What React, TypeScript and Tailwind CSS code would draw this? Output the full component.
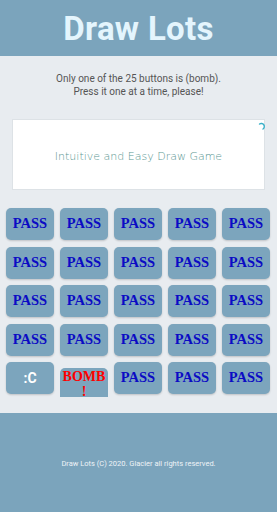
import React from "react";

const CELLS = Array.from({ length: 25 }, (_, i) => i);

function Cell({ i }: { i: number }) {
  if (i === 20) {
    return (
      <div className="h-[32px] rounded-[5px] bg-[#7ca5bd] shadow-[0_1px_2px_rgba(0,0,0,0.18)] flex items-center justify-center text-white font-bold text-[14px]" style={{ fontFamily: "Roboto, sans-serif" }}>
        :C
      </div>
    );
  }
  if (i === 21) {
    return (
      <div className="mt-[6px] h-[29px] rounded-t-[5px] bg-[#7ca5bd] flex flex-col items-center text-[#ff0000] font-bold text-[14px] leading-[15px] pt-[1px]" style={{ fontFamily: "'Liberation Serif', serif" }}>
        <span>BOMB</span>
        <span>!</span>
      </div>
    );
  }
  return (
    <div className="h-[32px] rounded-[5px] bg-[#7ca5bd] shadow-[0_1px_2px_rgba(0,0,0,0.18)] flex items-center justify-center text-[#0b0bc4] font-bold text-[14.5px]" style={{ fontFamily: "'Liberation Serif', serif" }}>
      PASS
    </div>
  );
}

export default function App() {
  return (
    <div className="w-[277px] h-[512px] flex flex-col bg-[#e8ecf0]" style={{ fontFamily: "Roboto, 'DejaVu Sans', sans-serif" }}>
      <header className="h-[56px] shrink-0 bg-[#7ba4bc] flex items-center justify-center">
        <h1 className="text-[33px] font-bold text-[#e4f5fd] leading-none tracking-[0.3px]">Draw Lots</h1>
      </header>

      <main className="pt-[16px] pb-[16px] flex flex-col">
        <p className="text-center text-[10px] leading-[13px] text-[#555]">
          Only one of the 25 buttons is (bomb).<br />
          Press it one at a time, please!
        </p>

        <div className="relative mx-[12px] mt-[21px] h-[71px] bg-white border border-[#dde2e6] flex items-center justify-center">
          <span className="text-[11px] text-[#5c9894] pt-[5px]" style={{ fontFamily: "'DejaVu Sans', sans-serif", fontWeight: 300 }}>
            Intuitive and Easy Draw Game
          </span>
          <svg className="absolute right-[-3px] top-[1px]" width="9" height="10" viewBox="0 0 9 10" fill="none">
            <path d="M1.5 3 A3 3 0 1 1 5 8" stroke="#3ab0c8" strokeWidth="1.4" strokeLinecap="round" />
          </svg>
        </div>

        <div className="mt-[18px] px-[6px] grid grid-cols-[repeat(5,48px)] gap-x-[6px] gap-y-[6.5px]">
          {CELLS.map(i => <Cell key={i} i={i} />)}
        </div>
      </main>

      <footer className="flex-1 bg-[#7ba4bc] flex items-center justify-center pt-[2px]">
        <p className="text-[7.5px] text-[#eef3f7]">Draw Lots (C) 2020. Glacier all rights reserved.</p>
      </footer>
    </div>
  );
}
